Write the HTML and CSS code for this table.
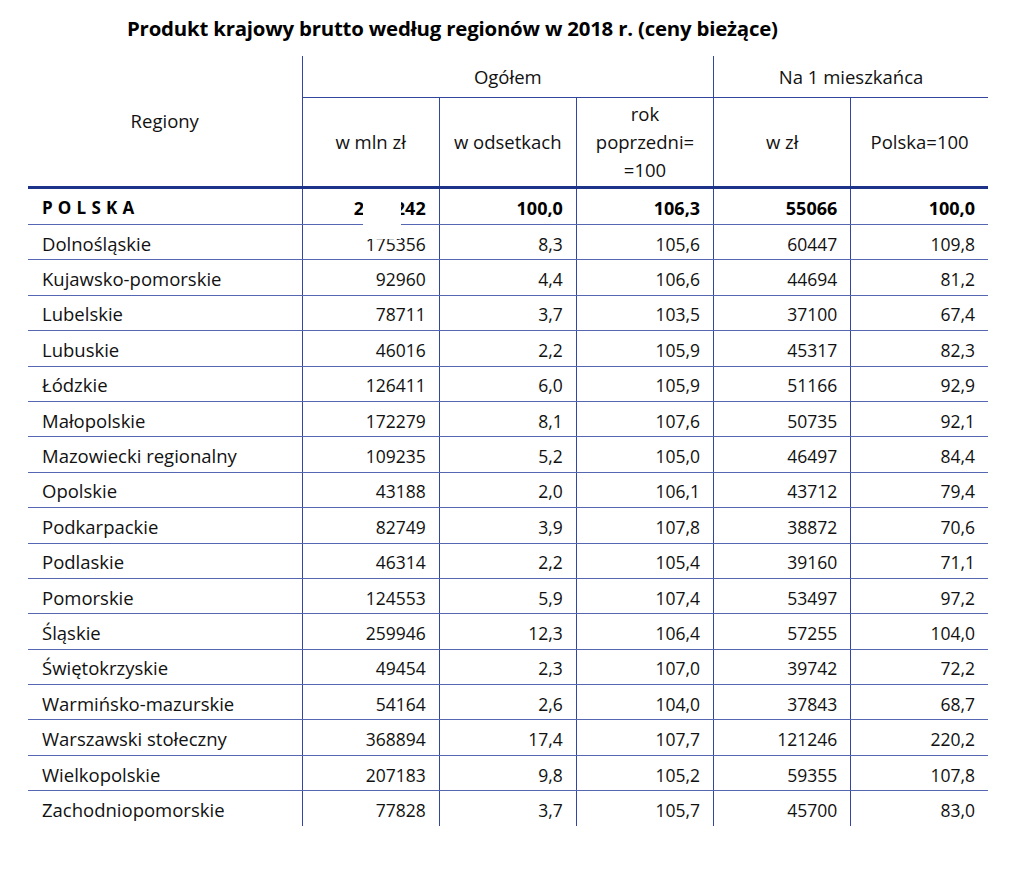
FILE: index.html
```html
<!DOCTYPE html>
<html lang="pl">
<head>
<meta charset="utf-8">
<title>Produkt krajowy brutto według regionów w 2018 r.</title>
<link rel="stylesheet" href="styles.css">
</head>
<body>
<h1 class="title">Produkt krajowy brutto według regionów w 2018 r. (ceny bieżące)</h1>
<div class="wrap">
<table class="gdp">
  <colgroup>
    <col class="c-name"><col class="c-num"><col class="c-num"><col class="c-num"><col class="c-num"><col class="c-num">
  </colgroup>
  <thead>
    <tr class="h1">
      <th rowspan="2" class="h-reg">Regiony</th>
      <th colspan="3" class="vl">Ogółem</th>
      <th colspan="2" class="vl">Na 1 mieszkańca</th>
    </tr>
    <tr class="h2">
      <th class="vl hl">w mln zł</th>
      <th class="vl hl">w odsetkach</th>
      <th class="vl hl">rok<br>poprzedni=<br>=100</th>
      <th class="vl hl">w zł</th>
      <th class="vl hl">Polska=100</th>
    </tr>
  </thead>
  <tbody>
    <tr class="total"><td class="name spaced">POLSKA</td><td class="num mask-cell">2120242<span class="mask"></span></td><td class="num">100,0</td><td class="num">106,3</td><td class="num">55066</td><td class="num">100,0</td></tr>
    <tr><td class="name">Dolnośląskie</td><td class="num">175356</td><td class="num">8,3</td><td class="num">105,6</td><td class="num">60447</td><td class="num">109,8</td></tr>
    <tr><td class="name">Kujawsko-pomorskie</td><td class="num">92960</td><td class="num">4,4</td><td class="num">106,6</td><td class="num">44694</td><td class="num">81,2</td></tr>
    <tr><td class="name">Lubelskie</td><td class="num">78711</td><td class="num">3,7</td><td class="num">103,5</td><td class="num">37100</td><td class="num">67,4</td></tr>
    <tr><td class="name">Lubuskie</td><td class="num">46016</td><td class="num">2,2</td><td class="num">105,9</td><td class="num">45317</td><td class="num">82,3</td></tr>
    <tr><td class="name">Łódzkie</td><td class="num">126411</td><td class="num">6,0</td><td class="num">105,9</td><td class="num">51166</td><td class="num">92,9</td></tr>
    <tr><td class="name">Małopolskie</td><td class="num">172279</td><td class="num">8,1</td><td class="num">107,6</td><td class="num">50735</td><td class="num">92,1</td></tr>
    <tr><td class="name">Mazowiecki regionalny</td><td class="num">109235</td><td class="num">5,2</td><td class="num">105,0</td><td class="num">46497</td><td class="num">84,4</td></tr>
    <tr><td class="name">Opolskie</td><td class="num">43188</td><td class="num">2,0</td><td class="num">106,1</td><td class="num">43712</td><td class="num">79,4</td></tr>
    <tr><td class="name">Podkarpackie</td><td class="num">82749</td><td class="num">3,9</td><td class="num">107,8</td><td class="num">38872</td><td class="num">70,6</td></tr>
    <tr><td class="name">Podlaskie</td><td class="num">46314</td><td class="num">2,2</td><td class="num">105,4</td><td class="num">39160</td><td class="num">71,1</td></tr>
    <tr><td class="name">Pomorskie</td><td class="num">124553</td><td class="num">5,9</td><td class="num">107,4</td><td class="num">53497</td><td class="num">97,2</td></tr>
    <tr><td class="name">Śląskie</td><td class="num">259946</td><td class="num">12,3</td><td class="num">106,4</td><td class="num">57255</td><td class="num">104,0</td></tr>
    <tr><td class="name">Świętokrzyskie</td><td class="num">49454</td><td class="num">2,3</td><td class="num">107,0</td><td class="num">39742</td><td class="num">72,2</td></tr>
    <tr><td class="name">Warmińsko-mazurskie</td><td class="num">54164</td><td class="num">2,6</td><td class="num">104,0</td><td class="num">37843</td><td class="num">68,7</td></tr>
    <tr><td class="name">Warszawski stołeczny</td><td class="num">368894</td><td class="num">17,4</td><td class="num">107,7</td><td class="num">121246</td><td class="num">220,2</td></tr>
    <tr><td class="name">Wielkopolskie</td><td class="num">207183</td><td class="num">9,8</td><td class="num">105,2</td><td class="num">59355</td><td class="num">107,8</td></tr>
    <tr class="last"><td class="name">Zachodniopomorskie</td><td class="num">77828</td><td class="num">3,7</td><td class="num">105,7</td><td class="num">45700</td><td class="num">83,0</td></tr>
  </tbody>
</table>
</div>
</body>
</html>
```
FILE: styles.css
```css
html, body {
  margin: 0;
  padding: 0;
  background: #ffffff;
}
body {
  font-family: "Open Sans", "Noto Sans", sans-serif;
  color: #111111;
}
.title {
  margin: 0;
  padding: 14px 0 0 127px;
  height: 42px;
  box-sizing: border-box;
  font-size: 20.4px;
  line-height: 28px;
  font-weight: 700;
  color: #000;
  letter-spacing: -0.2px;
}
.wrap {
  padding: 14px 0 0 28px;
}
.gdp {
  border-collapse: collapse;
  table-layout: fixed;
  width: 960px;
  font-size: 18.5px;
}
.c-name { width: 274px; }
.c-num { width: 137.2px; }
.gdp th {
  font-weight: 400;
  text-align: center;
  vertical-align: middle;
  padding: 0;
  line-height: 28px;
  color: #111;
  white-space: nowrap;
}
.h1 th { height: 41px; }
.h2 th { height: 88px; }
.gdp .vl { border-left: 1px solid #3246a0; }
.h1 .vl { border-bottom: 1px solid #3246a0; }
.h-reg { padding-bottom: 8px; }
.gdp thead tr.h2 th, .gdp thead .h-reg { border-bottom: 3px solid #1d338a; }
.gdp td {
  height: 31.4px;
  padding: 3px 14px 0;
  vertical-align: middle;
  border-bottom: 1px solid #5567b3;
  line-height: 20px;
  white-space: nowrap;
}
.gdp td + td { border-left: 1px solid #3246a0; }
.gdp td.num { text-align: right; padding-right: 13px; font-size: 17.5px; }
.total td { height: 32px; font-weight: 700; color: #000; }
.total td.num { font-size: 18px; }
.total td.spaced { font-size: 17px; letter-spacing: 5.2px; }
.last td { border-bottom: none; }
.mask-cell { position: relative; }
.mask {
  position: absolute;
  left: 60px;
  top: 2px;
  width: 38px;
  height: 48px;
  background: #fff;
}
```
